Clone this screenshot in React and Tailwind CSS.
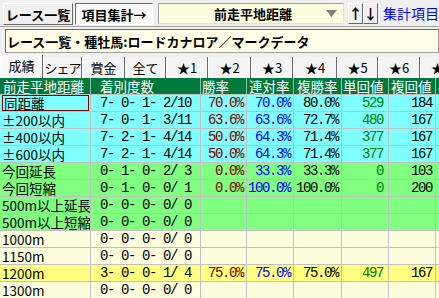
import React from "react";

const JP = "font-['Noto_Sans_CJK_JP','Noto_Sans_CJK_SC',sans-serif]";
const MONO = "font-['Liberation_Mono',monospace] text-[14px] tracking-[-1.4px] whitespace-pre leading-[15px]";

const rows = [
  { name: "同距離", c: "7- 0- 1- 2/10", w: "70.0%", r: "70.0%", f: "80.0%", t: "529", p: "184", bg: "bg-[#80ffff]", sel: true },
  { name: "±200以内", c: "7- 0- 1- 3/11", w: "63.6%", r: "63.6%", f: "72.7%", t: "480", p: "167", bg: "bg-[#80ffff]" },
  { name: "±400以内", c: "7- 2- 1- 4/14", w: "50.0%", r: "64.3%", f: "71.4%", t: "377", p: "167", bg: "bg-[#80ffff]" },
  { name: "±600以内", c: "7- 2- 1- 4/14", w: "50.0%", r: "64.3%", f: "71.4%", t: "377", p: "167", bg: "bg-[#80ffff]" },
  { name: "今回延長", c: "0- 1- 0- 2/ 3", w: "0.0%", r: "33.3%", f: "33.3%", t: "0", p: "103", bg: "bg-[#80ff80]" },
  { name: "今回短縮", c: "0- 1- 0- 0/ 1", w: "0.0%", r: "100.0%", f: "100.0%", t: "0", p: "200", bg: "bg-[#80ff80]" },
  { name: "500m以上延長", c: "0- 0- 0- 0/ 0", bg: "bg-[#80ff80]" },
  { name: "500m以上短縮", c: "0- 0- 0- 0/ 0", bg: "bg-[#80ff80]" },
  { name: "1000m", c: "0- 0- 0- 0/ 0", bg: "bg-[#ffffe0]" },
  { name: "1150m", c: "0- 0- 0- 0/ 0", bg: "bg-[#ffffe0]" },
  { name: "1200m", c: "3- 0- 0- 1/ 4", w: "75.0%", r: "75.0%", f: "75.0%", t: "497", p: "167", bg: "bg-[#ffff80]" },
  { name: "1300m", c: "0- 0- 0- 0/ 0", bg: "bg-[#ffffe0]" },
];

const tabs = [
  { l: "成績", w: "w-[43px]", x: "" },
  { l: "シェア", w: "w-[39px]", x: "tracking-[-1px]" },
  { l: "賞金", w: "w-[43px]", x: "" },
  { l: "全て", w: "w-[41px]", x: "" },
  { l: "★1", w: "w-[42px]", x: "" },
  { l: "★2", w: "w-[43px]", x: "" },
  { l: "★3", w: "w-[42px]", x: "" },
  { l: "★4", w: "w-[44px]", x: "" },
  { l: "★5", w: "w-[41px]", x: "" },
  { l: "★6", w: "w-[42px]", x: "" },
  { l: "★7", w: "w-[42px]", x: "" },
];

function Row({ r }) {
  const cell = "h-full border-r border-[#c0c0c0] shrink-0 flex items-center overflow-hidden";
  return (
    <div className={`flex h-[17px] border-b border-[#c0c0c0] ${r.bg}`}>
      <div className={`${cell} w-[91px] ${JP} text-[13.5px] text-black`}>
        {r.sel ? (
          <div className="ml-[2px] h-full w-[87px] border border-[#800000] flex items-center pl-[1px] leading-[14px]">
            {r.name}
          </div>
        ) : (
          <span className="pl-[2px] leading-[14px] whitespace-nowrap">{r.name}</span>
        )}
      </div>
      <div className={`${cell} w-[110px] pl-[9px] ${MONO} text-black`}>{r.c}</div>
      <div className={`${cell} w-[46px] justify-end pr-[3px] ${MONO} text-[#800000]`}>{r.w}</div>
      <div className={`${cell} w-[47px] justify-end pr-[3px] ${MONO} text-[#0000ff]`}>{r.r}</div>
      <div className={`${cell} w-[48px] justify-end pr-[3px] ${MONO} text-black`}>{r.f}</div>
      <div className={`${cell} w-[47px] justify-end pr-[5px] ${MONO} text-[#008000]`}>{r.t}</div>
      <div className={`${cell} w-[47px] justify-end pr-[3px] ${MONO} text-black`}>{r.p}</div>
      <div className={`${cell} w-[60px]`}></div>
    </div>
  );
}

export default function App() {
  const hcell = `h-full border-r border-[#8fbf9f] shrink-0 flex items-center overflow-hidden text-white text-[13.5px] ${JP} leading-[14px] whitespace-nowrap`;
  return (
    <div className="w-[439px] h-[298px] overflow-hidden bg-[#f0f0f0] relative">
      {/* top bar */}
      <div className={`h-[27px] flex items-start border-b border-[#a0a0a0] ${JP}`}>
        <div className="ml-[3px] mt-[3px] w-[70px] h-[22px] shrink-0 bg-[#f0f0f0] border border-t-white border-l-white border-r-[#696969] border-b-[#696969] flex items-center justify-center text-[13px] font-bold text-black leading-[15px] whitespace-nowrap">
          レース一覧
        </div>
        <div className="ml-[2px] mt-[3px] w-[78px] h-[22px] shrink-0 bg-[#fafafa] border border-t-[#696969] border-l-[#696969] border-r-white border-b-white flex items-center justify-center text-[13px] font-bold text-black leading-[15px] whitespace-nowrap">
          項目集計→
        </div>
        <div className="ml-[5px] mt-[3px] w-[186px] h-[21px] shrink-0 bg-[#ffffe0] border border-t-[#a0a0a0] border-l-[#a0a0a0] border-r-[#e0e0e0] border-b-[#e0e0e0] relative flex items-center justify-center text-[13px] font-bold text-black leading-[15px] whitespace-nowrap">
          <span className="ml-[4px]">前走平地距離</span>
          <svg className="absolute right-[6px] top-[6px]" width="11" height="7" viewBox="0 0 11 7">
            <polygon points="0,0 11,0 5.5,7" fill="#808080" />
          </svg>
        </div>
        <div className="ml-[4px] mt-[3px] w-[15px] h-[21px] shrink-0 bg-[#f0f0f0] border border-t-white border-l-white border-r-[#696969] border-b-[#696969] flex items-center justify-center text-[14px] font-bold text-black leading-[15px]">
          ↑
        </div>
        <div className="w-[15px] mt-[3px] h-[21px] shrink-0 bg-[#f0f0f0] border border-t-white border-l-white border-r-[#696969] border-b-[#696969] flex items-center justify-center text-[14px] font-bold text-black leading-[15px]">
          ↓
        </div>
        <div className="ml-[5px] mt-[5px] text-[14px] text-[#0000ff] leading-[16px] whitespace-nowrap">集計項目&gt;</div>
      </div>

      {/* title */}
      <div className={`mt-[2px] ml-[5px] h-[24px] bg-[#ffffe8] border border-t-[#696969] border-l-[#696969] border-b-[#a0a0a0] border-r-[#a0a0a0] flex items-center pl-[1px] text-[13px] font-bold text-black leading-[15px] whitespace-nowrap ${JP}`}>
        レース一覧・種牡馬:ロードカナロア／マークデータ
      </div>

      {/* tabs */}
      <div className={`mt-[2px] h-[23px] flex items-end ${JP}`}>
        {tabs.map((t, i) => (
          <div
            key={i}
            className={`${t.w} ${t.x} shrink-0 flex items-center justify-center text-[13px] text-black leading-[15px] whitespace-nowrap border-r border-r-[#696969] border-l border-l-white ${
              i === 0 ? "h-[23px] bg-[#f8f8f8] border-l-[#f8f8f8] pb-[3px]" : "h-[21px] bg-[#f4f4f4]"
            }`}
          >
            {t.l}
          </div>
        ))}
      </div>

      {/* table */}
      <div className="w-[500px]">
        <div className="flex h-[17px] border-b border-[#c0c0c0] bg-[#00793d]">
          <div className={`${hcell} w-[91px] pl-[3px]`}>前走平地距離</div>
          <div className={`${hcell} w-[110px] pl-[9px]`}>着別度数</div>
          <div className={`${hcell} w-[46px] pl-[1px]`}>勝率</div>
          <div className={`${hcell} w-[47px] pl-[2px]`}>連対率</div>
          <div className={`${hcell} w-[48px] pl-[3px]`}>複勝率</div>
          <div className={`${hcell} w-[47px] pl-[1px]`}>単回値</div>
          <div className={`${hcell} w-[47px] pl-[2px]`}>複回値</div>
          <div className={`${hcell} w-[60px] pl-[2px]`}>平均</div>
        </div>
        {rows.map((r, i) => (
          <Row key={i} r={r} />
        ))}
      </div>
    </div>
  );
}
